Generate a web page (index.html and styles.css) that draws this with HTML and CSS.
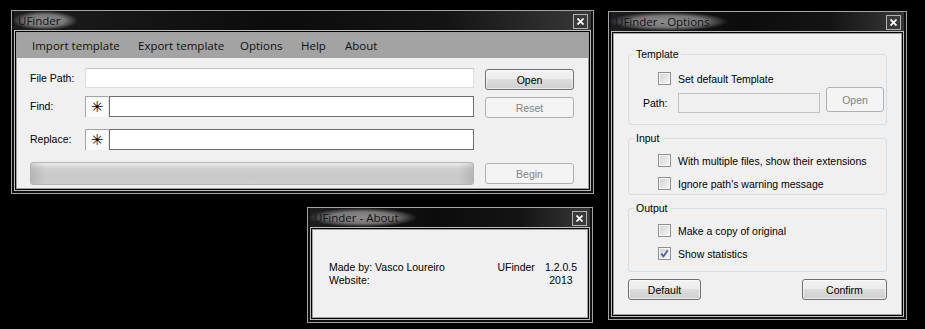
FILE: index.html
```html
<!DOCTYPE html>
<html lang="en">
<head>
    <meta charset="utf-8">
    <link rel="stylesheet" href="styles.css">
    <title>UFinder</title>
</head>
<body>
    <div class="win main">
        <div class="title">
            <span class="caption">UFinder</span>
            <span class="close"><svg width="7" height="7" viewBox="0 0 7 7"><path d="M0.5 0.5 L6.5 6.5 M6.5 0.5 L0.5 6.5" stroke="#fff" stroke-width="1.8"/></svg></span>
        </div>
        <div class="frame">
            <div class="client">
                <div class="menu">
                    <span>Import template</span>
                    <span>Export template</span>
                    <span>Options</span>
                    <span>Help</span>
                    <span>About</span>
                </div>
                <div class="form">
                    <div class="row">
                        <div class="label">File Path:</div>
                        <div class="field file"></div>
                        <div class="btn gap">Open</div>
                    </div>
                    <div class="row r-find">
                        <div class="label tall">Find:</div>
                        <div class="pattern"><span class="star">✳</span><span class="entry"></span></div>
                        <div class="btn gap off">Reset</div>
                    </div>
                    <div class="row r-replace">
                        <div class="label tall">Replace:</div>
                        <div class="pattern"><span class="star">✳</span><span class="entry"></span></div>
                    </div>
                    <div class="row r-progress">
                        <div class="progress"></div>
                        <div class="btn gap off">Begin</div>
                    </div>
                </div>
            </div>
        </div>
    </div>

    <div class="win about">
        <div class="title">
            <span class="caption">UFinder - About</span>
            <span class="close"><svg width="7" height="7" viewBox="0 0 7 7"><path d="M0.5 0.5 L6.5 6.5 M6.5 0.5 L0.5 6.5" stroke="#fff" stroke-width="1.8"/></svg></span>
        </div>
        <div class="frame">
            <div class="client about-body">
                <div>
                    <div>Made by: Vasco Loureiro</div>
                    <div>Website:</div>
                </div>
                <div class="ver">
                    <span>UFinder</span>
                    <span>1.2.0.5</span>
                    <span></span>
                    <span class="year">2013</span>
                </div>
            </div>
        </div>
    </div>

    <div class="win options">
        <div class="title">
            <span class="caption">UFinder - Options</span>
            <span class="close"><svg width="7" height="7" viewBox="0 0 7 7"><path d="M0.5 0.5 L6.5 6.5 M6.5 0.5 L0.5 6.5" stroke="#fff" stroke-width="1.8"/></svg></span>
        </div>
        <div class="frame">
            <div class="client opts">
                <div class="group g-template">
                    <span class="legend">Template</span>
                    <div class="check short"><span class="box"></span>Set default Template</div>
                    <div class="path-row">
                        <span class="path-label">Path:</span>
                        <span class="path-box"></span>
                        <span class="btn off small">Open</span>
                    </div>
                </div>
                <div class="group g-input">
                    <span class="legend">Input</span>
                    <div class="check"><span class="box"></span>With multiple files, show their extensions</div>
                    <div class="check"><span class="box"></span>Ignore path's warning message</div>
                </div>
                <div class="group g-output">
                    <span class="legend">Output</span>
                    <div class="check"><span class="box"></span>Make a copy of original</div>
                    <div class="check"><span class="box on"><svg width="11" height="11" viewBox="0 0 11 11"><path d="M2.2 5.6 L4.4 8.4 L8.8 2.2" fill="none" stroke="#4b5e96" stroke-width="1.7"/></svg></span>Show statistics</div>
                </div>
                <div class="actions">
                    <span class="btn b-default">Default</span>
                    <span class="btn b-confirm">Confirm</span>
                </div>
            </div>
        </div>
    </div>
</body>
</html>
```

FILE: styles.css
```css
* { margin: 0; padding: 0; box-sizing: border-box; }
html, body { width: 925px; height: 329px; }
body { background: #000; position: relative; overflow: hidden; font-family: "Liberation Sans", Arial, sans-serif; font-size: 10.5px; color: #000; }

/* window chrome */
.win { position: absolute; display: flex; flex-direction: column; border: 1px solid #a4a4a4; background: #101010; padding: 0 2px 2px; }
.main { left: 11px; top: 10px; width: 583px; height: 184px; }
.about { left: 307px; top: 207px; width: 286px; height: 116px; }
.options { left: 608px; top: 11px; width: 299px; height: 309px; }
.title { flex: none; height: 19px; display: flex; align-items: center; justify-content: space-between; background: linear-gradient(to right, #1d1d1d 0%, #0c0c0c 45%, #141414 75%, #383838 100%); }
.caption { font-family: "Open Sans", "Noto Sans", sans-serif; font-size: 11.5px; line-height: 19px; color: #121218; padding: 0 18px 0 6px; margin-left: -2px; background: radial-gradient(closest-side, #8c8c8c 0%, #787878 60%, rgba(70,70,70,0) 100%); }
.close { width: 15px; height: 15px; margin: 2px 3px 0 0; border: 1px solid #b2b2b2; background: #3a3a3a; display: flex; align-items: center; justify-content: center; }
.frame { flex: 1; display: flex; border: 1px solid #bdbdbd; padding: 1px; background: #000; }
.client { flex: 1; border: 1px solid #a0a0a0; background: #f0f0f0; }

/* main */
.menu { height: 25px; display: grid; grid-template-columns: 106px 102px 61px 44px auto; align-items: center; padding-left: 15px; background: #a3a3a3; font-family: "Open Sans", "Noto Sans", sans-serif; font-size: 11.5px; color: #111; }
.form { padding: 10px 0 0 13px; }
.row { display: flex; align-items: flex-start; }
.r-find { margin-top: 6px; }
.r-replace { margin-top: 11px; }
.r-progress { margin-top: 12px; }
.label { width: 55px; line-height: 20px; }
.label.tall { line-height: 21px; }
.field { height: 20px; background: #fff; border: 1px solid #dadde3; border-top-color: #c0c3ca; }
.file { width: 389px; }
.pattern { width: 389px; height: 21px; display: flex; }
.star { width: 24px; display: flex; align-items: center; justify-content: center; background: #fafafa; border-left: 1px solid #a4a4a4; border-top: 1px solid #a4a4a4; border-right: 1px solid #e6e6e6; font-family: "DejaVu Sans", sans-serif; font-size: 15px; line-height: 1; }
.entry { flex: 1; background: #fff; border: 1px solid #6f6f6f; }
.progress { width: 444px; height: 23px; border: 1px solid #b4b4b4; border-radius: 3px; background: linear-gradient(to right, rgba(0,0,0,0.1), rgba(0,0,0,0) 14px, rgba(0,0,0,0) calc(100% - 14px), rgba(0,0,0,0.1)), linear-gradient(#ececec, #d0d0d0 25%, #c8c8c8 60%, #cdcdcd); }

/* buttons */
.btn { width: 89px; height: 21px; display: flex; align-items: center; justify-content: center; border: 1px solid #707070; border-radius: 3px; background: linear-gradient(#f3f3f3 0%, #ebebeb 50%, #dddddd 50%, #cfcfcf 100%); box-shadow: inset 0 0 0 1px rgba(255,255,255,0.6); }
.btn.gap { margin: 1px 0 0 11px; }
.btn.off { border-color: #adb2b5; background: #f4f4f4; color: #838383; box-shadow: none; }

/* about */
.about-body { display: flex; align-items: flex-start; padding: 31px 10px 0 16px; line-height: 13px; }
.ver { margin-left: auto; display: grid; grid-template-columns: auto auto; column-gap: 10px; }
.year { text-align: center; }

/* options */
.opts { padding: 20px 14px 0; }
.group { position: relative; border: 1px solid #d5dfe5; border-radius: 3px; }
.g-template { height: 71px; padding-top: 15px; }
.g-input { height: 57px; padding-top: 10px; margin-top: 13px; }
.g-output { height: 64px; padding-top: 10px; margin-top: 13px; }
.legend { position: absolute; top: -7px; left: 5px; padding: 0 2px; line-height: 13px; background: #f0f0f0; }
.check { height: 23px; display: flex; align-items: center; gap: 7px; padding-left: 29px; }
.check.short { height: 17px; }
.box { width: 13px; height: 13px; flex: none; display: flex; align-items: center; justify-content: center; border: 1px solid #8e8f8f; background: linear-gradient(135deg, #d2d2d2, #f5f5f5); box-shadow: inset 0 0 0 1px #f6f6f6; }
.path-row { display: flex; align-items: flex-start; padding-left: 14px; }
.path-label { width: 35px; margin-top: 6px; line-height: 20px; }
.path-box { width: 142px; height: 20px; margin-top: 6px; border: 1px solid #c2c2c2; background: #f0f0f0; }
.btn.small { width: 58px; height: 25px; margin-left: 6px; }
.actions { display: flex; justify-content: space-between; margin-top: 7px; }
.b-default { width: 73px; }
.b-confirm { width: 85px; }
```
